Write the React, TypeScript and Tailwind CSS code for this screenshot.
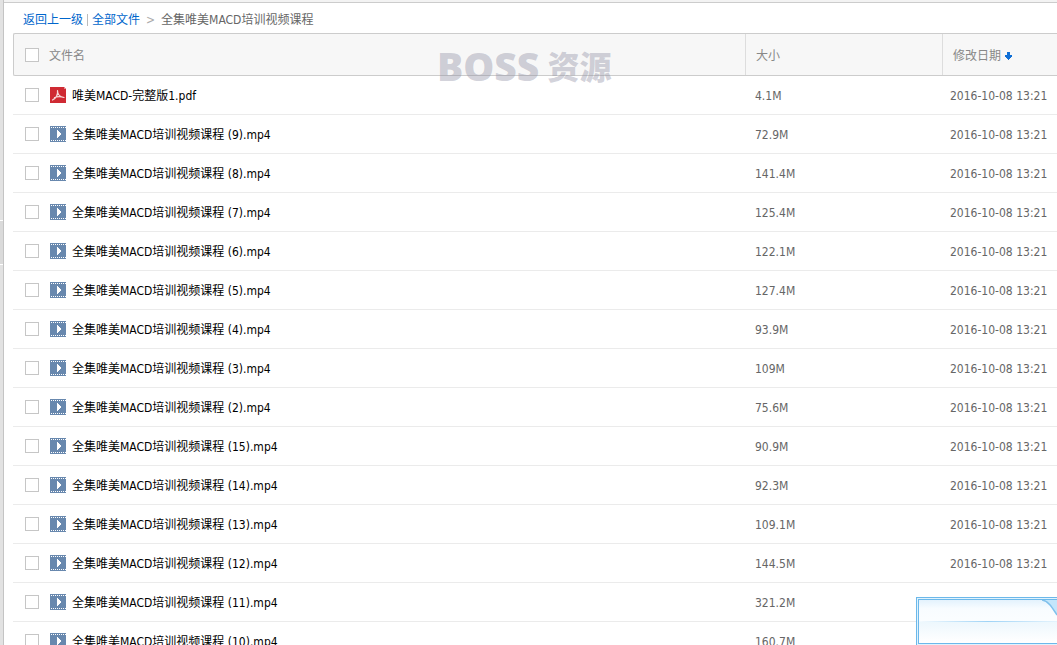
import React from 'react';

interface FileItem {
  name: string;
  type: 'pdf' | 'video';
  size: string;
  date: string;
}

const DATE = '2016-10-08 13:21';

const files: FileItem[] = [
  { name: '唯美MACD-完整版1.pdf', type: 'pdf', size: '4.1M', date: DATE },
  { name: '全集唯美MACD培训视频课程 (9).mp4', type: 'video', size: '72.9M', date: DATE },
  { name: '全集唯美MACD培训视频课程 (8).mp4', type: 'video', size: '141.4M', date: DATE },
  { name: '全集唯美MACD培训视频课程 (7).mp4', type: 'video', size: '125.4M', date: DATE },
  { name: '全集唯美MACD培训视频课程 (6).mp4', type: 'video', size: '122.1M', date: DATE },
  { name: '全集唯美MACD培训视频课程 (5).mp4', type: 'video', size: '127.4M', date: DATE },
  { name: '全集唯美MACD培训视频课程 (4).mp4', type: 'video', size: '93.9M', date: DATE },
  { name: '全集唯美MACD培训视频课程 (3).mp4', type: 'video', size: '109M', date: DATE },
  { name: '全集唯美MACD培训视频课程 (2).mp4', type: 'video', size: '75.6M', date: DATE },
  { name: '全集唯美MACD培训视频课程 (15).mp4', type: 'video', size: '90.9M', date: DATE },
  { name: '全集唯美MACD培训视频课程 (14).mp4', type: 'video', size: '92.3M', date: DATE },
  { name: '全集唯美MACD培训视频课程 (13).mp4', type: 'video', size: '109.1M', date: DATE },
  { name: '全集唯美MACD培训视频课程 (12).mp4', type: 'video', size: '144.5M', date: DATE },
  { name: '全集唯美MACD培训视频课程 (11).mp4', type: 'video', size: '321.2M', date: DATE },
  { name: '全集唯美MACD培训视频课程 (10).mp4', type: 'video', size: '160.7M', date: DATE },
];

const PdfIcon = () => (
  <svg width="16" height="16" viewBox="0 0 16 16" className="shrink-0" aria-hidden="true">
    <path d="M0 0h14l2 2v14H0z" fill="#cf2a33" />
    <path d="M14 0v2h2z" fill="#e98a8f" />
    <path
      d="M7.500 3.500C8 7 6 11 2.500 13M7.500 3.500C7.500 7 10 10 14 10.500M4.500 10.500C7 9.500 10 9 14 10.500"
      fill="none"
      stroke="#f7d9da"
      strokeWidth="1.200"
      strokeLinecap="round"
    />
  </svg>
);

const VideoIcon = () => (
  <svg width="16" height="16" viewBox="0 0 16 16" className="shrink-0" shapeRendering="crispEdges" aria-hidden="true">
    <path d="M0 0h16v16H0z" fill="#6888ae" />
    <path d="M1 1.500h15M1 14.500h15" stroke="#fff" strokeDasharray="1 1" />
    <path d="M7 4h1v1h1v1h1v1h1v2h-1v1H9v1H8v1H7z" fill="#fff" />
  </svg>
);

const SortArrow = () => (
  <svg width="7" height="8" viewBox="0 0 7 8" shapeRendering="crispEdges" aria-hidden="true">
    <path d="M2 0h3v3h2v2H6v1H5v1H4v1H3V7H2V6H1V5H0V3h2z" fill="#0f6fd6" />
  </svg>
);

const Checkbox = ({ label }: { label: string }) => (
  <input
    type="checkbox"
    aria-label={label}
    className="w-3.5 h-3.5 shrink-0 appearance-none border border-[#c6c6c6] bg-white checked:bg-[#0f6fd6]"
  />
);

const Breadcrumb = () => (
  <nav className="flex items-center h-[30px] pl-2.5 pt-1 text-[#666]">
    <a href="#up" className="text-[#0066cc]">返回上一级</a>
    <span className="mx-1 h-3 w-px bg-[#bbb]" />
    <a href="#all" className="text-[#0066cc]">全部文件</a>
    <span className="px-1.5 text-[#aaa]">&gt;</span>
    <span>全集唯美MACD培训视频课程</span>
  </nav>
);

const Watermark = () => (
  <div className="absolute top-[25px] left-[437px] flex items-center gap-2 h-20 text-[#8c8ca0]/40 pointer-events-none whitespace-nowrap">
    <span className="font-['Open_Sans','Noto_Sans',sans-serif] text-[39px] leading-none font-extrabold">BOSS</span>
    <span className="font-['Noto_Sans_CJK_SC',sans-serif] text-[32px] leading-none font-black">资源</span>
  </div>
);

const CornerPanel = () => (
  <div className="absolute right-0 bottom-0 w-[141px] h-12 border-t border-l border-[#6cb8ea] bg-[#dff3fe] pt-px pl-px">
    <div className="relative h-[45px] border-t border-l border-b border-[#6cb8ea] bg-linear-to-b from-[#e3f2fd] via-[#f8fcff] via-20% to-white">
      <div className="absolute inset-x-0 top-[22px] h-5 bg-linear-to-b from-[#edf7fd] to-white" />
      <div className="absolute inset-x-0 top-[21px] h-px bg-linear-to-r from-[#f4fafe] via-[#9fd3f6] to-[#e4f3fd]" />
      <svg width="15" height="16" viewBox="0 0 15 16" className="absolute right-0 top-0" aria-hidden="true">
        <path d="M0 0h15v15C11 9 7 1 0 0z" fill="#c3e6fb" />
        <path d="M0 0c7 1 11 9 15 15" fill="none" stroke="#7fc0ec" strokeWidth="1.500" />
      </svg>
    </div>
  </div>
);

const FileTable = () => (
  <table className="w-full table-fixed border-separate border-spacing-0 text-left">
    <colgroup>
      <col />
      <col className="w-[197px]" />
      <col className="w-[115px]" />
    </colgroup>
    <thead>
      <tr className="h-[43px] text-[#888]">
        <th className="rounded-l-xs border-y border-l border-[#ccc] bg-[#f7f7f7] p-0 font-normal">
          <label className="flex items-center pl-[11px]">
            <Checkbox label="全选" />
            <span className="pl-2.5 pt-0.5">文件名</span>
          </label>
        </th>
        <th className="border-y border-[#ccc] bg-[#f7f7f7] p-0 font-normal">
          <div className="flex h-[41px] items-center border-l border-[#ddd] pl-2.5 pt-0.5">大小</div>
        </th>
        <th className="border-y border-[#ccc] bg-[#f7f7f7] p-0 font-normal">
          <button className="flex h-[41px] w-full items-center gap-1 border-l border-[#ddd] pl-2.5 pt-0.5">
            修改日期 <SortArrow />
          </button>
        </th>
      </tr>
    </thead>
    <tbody>
      {files.map((file) => (
        <tr key={file.name} className="h-[39px] text-[#666]">
          <td className="border-b border-[#ebebeb] p-0">
            <div className="flex items-center pl-3">
              <Checkbox label={file.name} />
              <a href="#file" className="flex items-center gap-1.5 pl-[11px] text-black">
                {file.type === 'pdf' ? <PdfIcon /> : <VideoIcon />}
                <span className="pt-0.5">{file.name}</span>
              </a>
            </div>
          </td>
          <td className="border-b border-[#ebebeb] p-0 pt-0.5 pl-2.5">{file.size}</td>
          <td className="border-b border-[#ebebeb] p-0 pt-0.5 pl-2 whitespace-nowrap">{file.date}</td>
        </tr>
      ))}
    </tbody>
  </table>
);

const App: React.FC = () => {
  return (
    <div className="relative flex h-screen overflow-hidden bg-white font-['DejaVu_Sans_Condensed','Noto_Sans_CJK_SC',sans-serif] text-xs leading-4">
      <aside className="flex w-1 shrink-0 flex-col border-r border-[#c4c4c4] bg-[#e2e2e2] pt-[220px]">
        <div className="h-[45px] border-y border-white bg-[#dadada]" />
      </aside>
      <main className="min-w-0 flex-1">
        <div className="h-[3px] border-b border-[#ccc] bg-[#f3f3f3]" />
        <div className="pl-[9px]">
          <Breadcrumb />
          <FileTable />
        </div>
      </main>
      <Watermark />
      <CornerPanel />
    </div>
  );
};

export default App;
